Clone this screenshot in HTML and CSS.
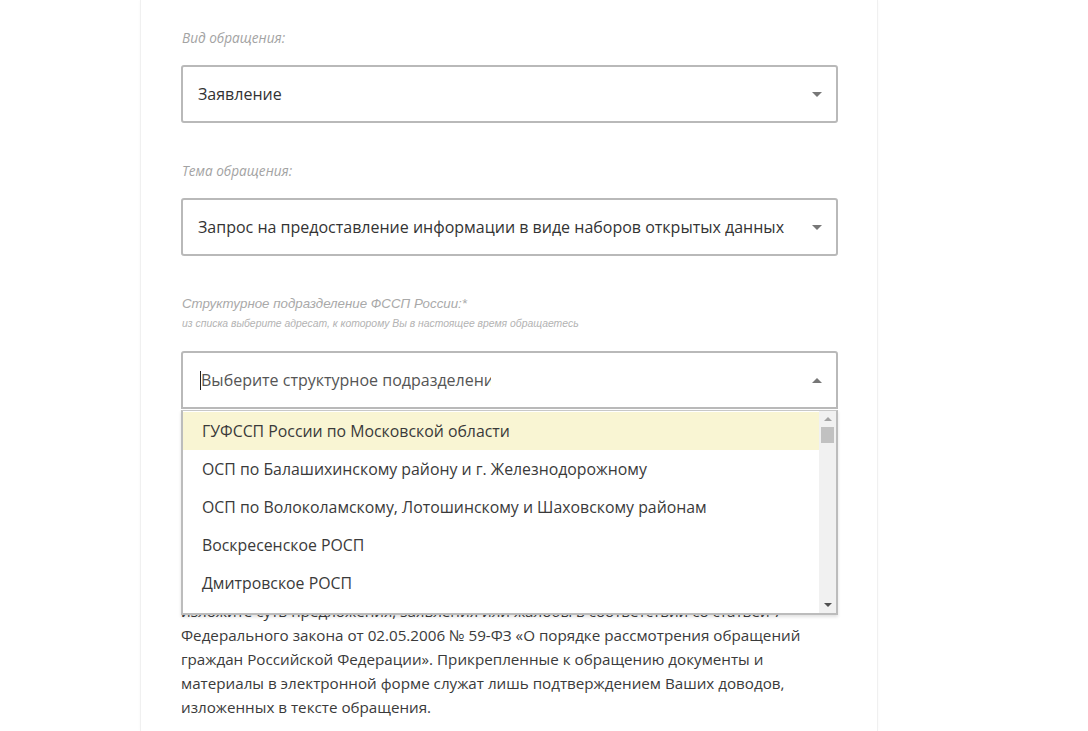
FILE: index.html
```html
<!DOCTYPE html>
<html lang="ru">
<head>
<meta charset="utf-8">
<title>Обращение</title>
<link rel="stylesheet" href="styles.css">
</head>
<body>
<div class="page">
  <div class="card">
    <div class="field">
      <div class="label">Вид обращения:</div>
      <div class="select">
        <span class="value">Заявление</span>
        <span class="arrow down"></span>
      </div>
    </div>
    <div class="field">
      <div class="label">Тема обращения:</div>
      <div class="select">
        <span class="value">Запрос на предоставление информации в виде наборов открытых данных</span>
        <span class="arrow down"></span>
      </div>
    </div>
    <div class="field">
      <div class="label label-alt">Структурное подразделение ФССП России:*</div>
      <div class="hint">из списка выберите адресат, к которому Вы в настоящее время обращаетесь</div>
      <div class="combo">
        <div class="select open">
          <span class="caret"></span><span class="placeholder">Выберите структурное подразделени</span>
          <span class="arrow up"></span>
        </div>
        <div class="dropdown">
          <ul class="options">
            <li class="option active">ГУФССП России по Московской области</li>
            <li class="option">ОСП по Балашихинскому району и г. Железнодорожному</li>
            <li class="option">ОСП по Волоколамскому, Лотошинскому и Шаховскому районам</li>
            <li class="option">Воскресенское РОСП</li>
            <li class="option">Дмитровское РОСП</li>
          </ul>
          <div class="scrollbar">
            <span class="sb-arrow sb-up"></span>
            <span class="sb-thumb"></span>
            <span class="sb-fill"></span>
            <span class="sb-arrow sb-down"></span>
          </div>
        </div>
      </div>
    </div>
    <p class="text">В обращении в обязательном порядке укажите свои фамилию, имя, отчество,<br>
    адрес электронной почты, почтовый адрес, по которому должны быть<br>
    направлены ответ или уведомление о переадресации обращения,<br>
    и наименование органа, в который направляете обращение,<br>
    изложите суть предложения, заявления или жалобы в соответствии со статьей 7<br>
    Федерального закона от 02.05.2006 № 59-ФЗ «О порядке рассмотрения обращений<br>
    граждан Российской Федерации». Прикрепленные к обращению документы и<br>
    материалы в электронной форме служат лишь подтверждением Ваших доводов,<br>
    изложенных в тексте обращения.</p>
  </div>
</div>
</body>
</html>
```
FILE: styles.css
```css
html, body {
  margin: 0;
  padding: 0;
  background: #ffffff;
  height: 100%;
  overflow: hidden;
}
body {
  font-family: "Open Sans", "Liberation Sans", sans-serif;
  color: #333333;
}
.page {
  display: flex;
  padding-left: 140px;
  min-height: 731px;
}
.card {
  width: 738px;
  box-sizing: border-box;
  padding: 28px 40px 0 40px;
  background: #fff;
  border-left: 1px solid #f0f0f0;
  border-right: 1px solid #f0f0f0;
  box-shadow: 0 0 3px rgba(0,0,0,0.03);
}
.field {
  margin-bottom: 38px;
}
.label {
  font-style: italic;
  font-size: 13.6px;
  line-height: 20px;
  color: #a3a3a3;
  padding-left: 1px;
  margin-bottom: 17px;
}
.label-alt {
  font-family: "Liberation Sans", Arial, sans-serif;
  font-size: 13.3px;
  margin-bottom: 3px;
  color: #a9a9a9;
}
.hint {
  font-family: "Liberation Sans", Arial, sans-serif;
  font-style: italic;
  font-size: 10.4px;
  line-height: 14px;
  color: #b3b3b3;
  padding-left: 1px;
  margin-bottom: 20px;
}
.select {
  width: 657px;
  height: 58px;
  box-sizing: border-box;
  border: 2px solid #b9b9b9;
  border-radius: 3px;
  display: flex;
  align-items: center;
  padding: 0 14px 0 15px;
  font-size: 16px;
  color: #333;
  background: #fff;
}
.value {
  flex: 1;
  white-space: nowrap;
  overflow: hidden;
}
.arrow {
  width: 0;
  height: 0;
  border-left: 5px solid transparent;
  border-right: 5px solid transparent;
}
.arrow.down {
  border-top: 5px solid #777;
}
.arrow.up {
  border-bottom: 5px solid #777;
}
.combo {
  position: relative;
}
.select.open {
  border-radius: 3px 3px 0 0;
  padding-left: 17px;
}
.caret {
  width: 1px;
  height: 19px;
  background: #222;
}
.placeholder {
  flex: 1;
  color: #555;
  white-space: nowrap;
  overflow: hidden;
  max-width: 290px;
  margin-right: auto;
}
.dropdown {
  position: absolute;
  left: 0;
  top: 59px;
  width: 657px;
  height: 205px;
  box-sizing: border-box;
  border: 2px solid #bcbcbc;
  border-top: 1px solid #c8c8c8;
  background: #fff;
  display: flex;
  box-shadow: 0 2px 3px rgba(0,0,0,0.12);
  z-index: 2;
}
.options {
  list-style: none;
  margin: 0;
  padding: 1px 0 0 0;
  flex: 1;
  overflow: hidden;
}
.option {
  height: 38px;
  line-height: 38px;
  padding-left: 19px;
  font-size: 15.85px;
  color: #3a3a3a;
  white-space: nowrap;
}
.option.active {
  background: #f9f5d3;
}
.scrollbar {
  width: 17px;
  background: #f1f1f1;
  display: flex;
  flex-direction: column;
  align-items: center;
}
.sb-arrow {
  width: 0;
  height: 0;
  border-left: 4px solid transparent;
  border-right: 4px solid transparent;
  margin: 6px 0;
}
.sb-up {
  border-bottom: 4px solid #a3a3a3;
}
.sb-down {
  border-top: 4px solid #505050;
}
.sb-thumb {
  width: 13px;
  height: 16px;
  background: #c1c1c1;
}
.sb-fill {
  flex: 1;
}
.text {
  margin: 94px 0 0 0;
  font-size: 15.2px;
  line-height: 24px;
  color: #3a3a3a;
  white-space: nowrap;
}
```
